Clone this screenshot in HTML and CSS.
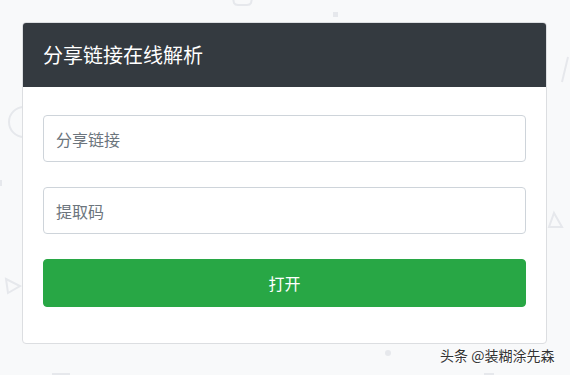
FILE: index.html
```html
<!DOCTYPE html>
<html lang="zh">
<head>
<meta charset="utf-8">
<link rel="stylesheet" href="styles.css">
</head>
<body>
<svg class="bg" width="570" height="375" viewBox="0 0 570 375" xmlns="http://www.w3.org/2000/svg">
  <g fill="none" stroke="#e6e8ec" stroke-width="2">
    <path d="M232 -6 L234 3 Q235 5 238 5 L247 5 Q250 5 251 3 L253 -6"/>
    <path d="M24 107 A15 15 0 0 0 24 137"/>
    <path d="M6 279 L20 286 L8 293 Z"/>
    <path d="M568 57 L562 82"/>
    <path d="M554 213 L562 227 L549 227 Z"/>
  </g>
  <g fill="#e6e8ec">
    <rect x="333" y="12" width="5" height="5"/>
    <rect x="0" y="180" width="2" height="6"/>
    <circle cx="388" cy="353" r="3"/>
    <rect x="52" y="373" width="18" height="2"/>
    <rect x="484" y="373" width="10" height="2"/>
  </g>
</svg>
<main class="page">
  <section class="card">
    <header class="card-header">分享链接在线解析</header>
    <div class="card-body">
      <input class="field" type="text" placeholder="分享链接">
      <input class="field" type="text" placeholder="提取码">
      <button class="btn" type="button">打开</button>
    </div>
  </section>
</main>
<div class="watermark">头条 @装糊涂先森</div>
</body>
</html>
```

FILE: styles.css
```css
html, body {
  margin: 0;
  padding: 0;
}
body {
  width: 570px;
  height: 375px;
  overflow: hidden;
  background: #f8f9fa;
  font-family: "Microsoft YaHei", "Noto Sans CJK SC", "Liberation Sans", sans-serif;
  position: relative;
}
.bg {
  position: absolute;
  left: 0;
  top: 0;
}
.page {
  position: relative;
  padding: 22px 0 0 22px;
}
.card {
  width: 523px;
  background: #fff;
  border: 1px solid #dcdee1;
  border-radius: 4px;
  overflow: hidden;
}
.card-header {
  background: #343a40;
  color: #fff;
  font-size: 20px;
  line-height: 24px;
  height: 24px;
  padding: 20px 20px;
}
.card-body {
  padding: 28px 20px 36px;
  display: flex;
  flex-direction: column;
  gap: 25px;
}
.field {
  box-sizing: border-box;
  height: 47px;
  width: 100%;
  margin: 0;
  padding: 0 12px;
  border: 1px solid #ced4da;
  border-radius: 4px;
  font-family: inherit;
  font-size: 16px;
  color: #495057;
  background: #fff;
  outline: none;
}
.field::placeholder {
  color: #6c757d;
  opacity: 1;
}
.btn {
  box-sizing: border-box;
  height: 48px;
  width: 100%;
  margin: 0;
  border: 1px solid #28a745;
  border-radius: 4px;
  background: #28a745;
  color: #fff;
  font-family: inherit;
  font-size: 16px;
}
.watermark {
  position: absolute;
  left: 440px;
  top: 345px;
  font-size: 14px;
  line-height: 20px;
  color: #333;
  text-shadow: 0 0 1px #fff, 1px 1px 0 #fff;
  white-space: nowrap;
}
```
